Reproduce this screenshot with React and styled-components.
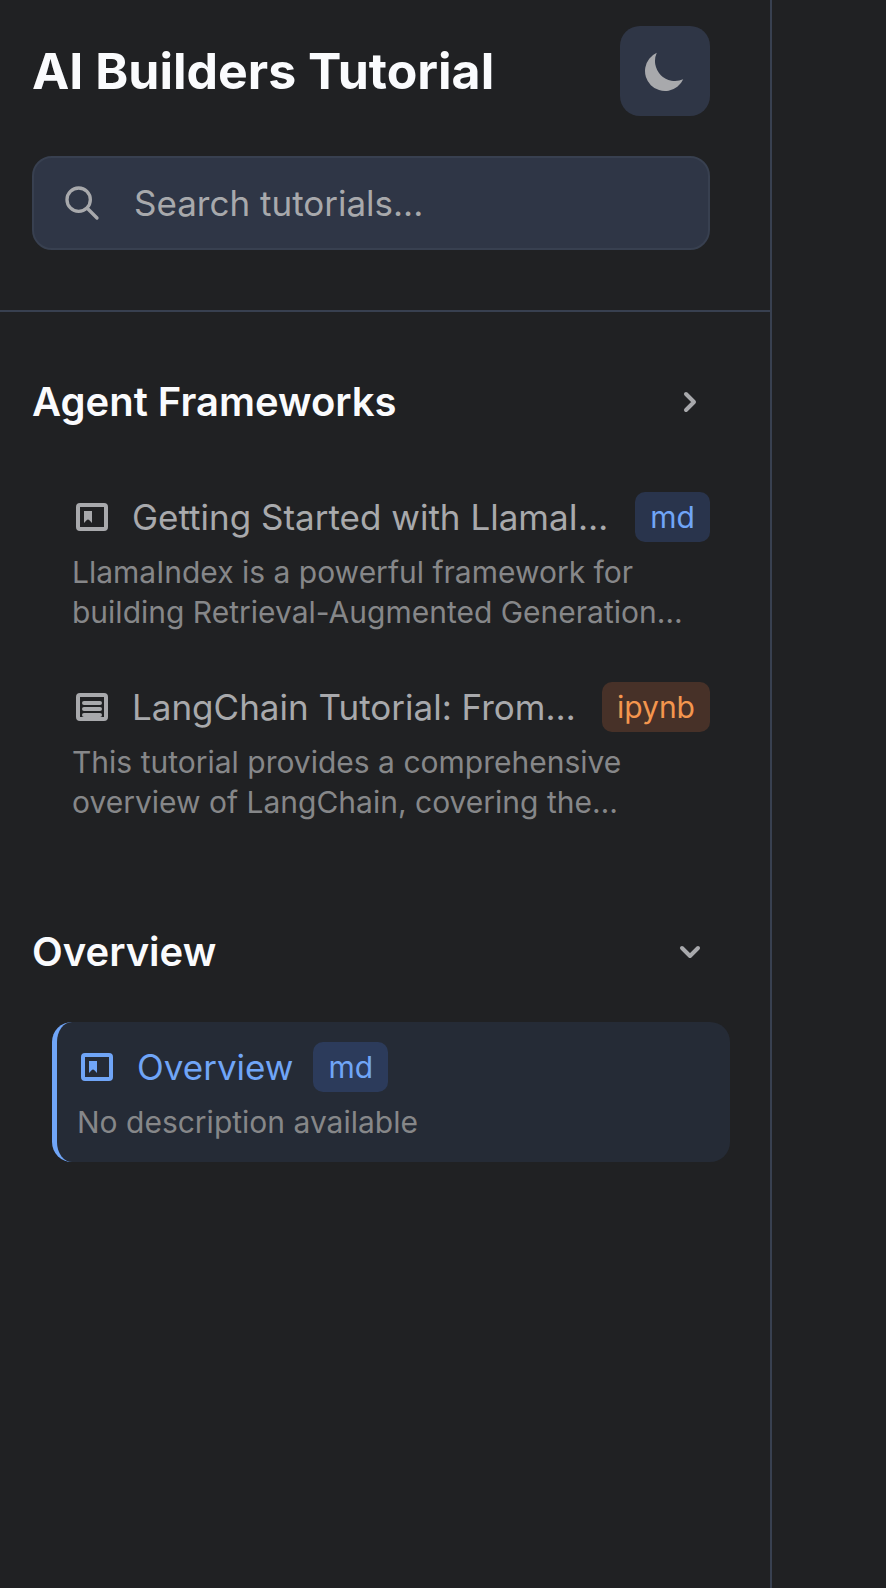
import React from "react";
import styled, { createGlobalStyle, css } from "styled-components";

const colors = {
  page: "#202123",
  surface: "#2f3646",
  line: "#384050",
  heading: "#fafbfd",
  text: "#a8a9ac",
  muted: "#868789",
  blue: "#70a5f7",
  orange: "#f4964e",
};

const GlobalStyle = createGlobalStyle`
  * { box-sizing: border-box; }
  body {
    margin: 0;
    background: ${colors.page};
    font-family: Inter, sans-serif;
    -webkit-font-smoothing: antialiased;
  }
`;

const Sidebar = styled.aside`
  width: 772px;
  height: 1588px;
  border-right: 2px solid ${colors.line};
`;

const Header = styled.header`
  height: 312px;
  padding: 26px 60px 0 32px;
  border-bottom: 2px solid ${colors.line};
`;

const TitleRow = styled.div`
  display: flex;
  align-items: center;
  justify-content: space-between;
  margin-bottom: 40px;
`;

const Title = styled.h1`
  margin: 0;
  font-size: 50px;
  line-height: 70px;
  font-weight: 700;
  color: ${colors.heading};
`;

const ThemeButton = styled.button`
  display: flex;
  width: 90px;
  height: 90px;
  padding: 20px;
  border: 0;
  border-radius: 20px;
  background: ${colors.surface};
  color: ${colors.text};
`;

const SearchBox = styled.label`
  display: flex;
  align-items: center;
  height: 94px;
  padding: 0 28px;
  gap: 32px;
  border: 2px solid ${colors.line};
  border-radius: 20px;
  background: ${colors.surface};
  color: ${colors.text};
`;

const SearchInput = styled.input`
  flex: 1;
  min-width: 0;
  padding: 0;
  border: 0;
  outline: 0;
  background: transparent;
  font: inherit;
  font-size: 35px;
  line-height: 50px;
  color: inherit;
  &::placeholder {
    color: ${colors.text};
    opacity: 1;
  }
`;

const Nav = styled.nav`
  display: flex;
  flex-direction: column;
  gap: 80px;
  padding: 60px 40px 0 32px;
`;

const SectionHeader = styled.div`
  display: flex;
  align-items: center;
  justify-content: space-between;
  height: 60px;
  padding-right: 20px;
  margin-bottom: 40px;
  color: ${colors.text};
`;

const SectionTitle = styled.h2`
  margin: 0;
  font-size: 40px;
  line-height: 60px;
  font-weight: 600;
  color: ${colors.heading};
`;

const ItemList = styled.div`
  display: flex;
  flex-direction: column;
  gap: 10px;
  margin-left: 20px;
`;

const Item = styled.a`
  display: block;
  padding: 20px;
  border-radius: 20px;
  color: ${colors.text};
  ${(p) =>
    p.$active &&
    css`
      border-left: 5px solid ${colors.blue};
      background: #252b36;
      color: ${colors.blue};
    `}
`;

const ItemTop = styled.div`
  display: flex;
  align-items: center;
  gap: 20px;
  height: 50px;
  margin-bottom: 10px;
`;

const ItemTitle = styled.span`
  flex: ${(p) => (p.$fill ? "1 1 0" : "0 0 auto")};
  font-size: 35px;
  line-height: 50px;
  white-space: nowrap;
`;

const tones = {
  blue: css`
    background: #29344c;
    color: ${colors.blue};
  `,
  active: css`
    background: #2c3b5b;
    color: ${colors.blue};
  `,
  orange: css`
    background: #473128;
    color: ${colors.orange};
  `,
};

const Tag = styled.span`
  height: 50px;
  padding: 5px 15px;
  border-radius: 10px;
  font-size: 30px;
  line-height: 40px;
  ${(p) => tones[p.$tone]}
`;

const Description = styled.p`
  margin: 0;
  font-size: 30px;
  line-height: 40px;
  white-space: pre-line;
  color: ${colors.muted};
`;

const Icon = styled.svg`
  display: block;
  flex: none;
  width: ${(p) => p.$size || 40}px;
  height: ${(p) => p.$size || 40}px;
`;

const MoonIcon = () => (
  <Icon $size={50} viewBox="0 0 20 20" fill="currentColor">
    <path d="M17.293 13.293A8 8 0 016.707 2.707a8.001 8.001 0 1010.586 10.586z" />
  </Icon>
);

const SearchIcon = () => (
  <Icon viewBox="0 0 24 24" fill="none" stroke="currentColor" strokeWidth="2" strokeLinecap="round">
    <path d="M21 21l-6-6m2-5a7 7 0 11-14 0 7 7 0 0114 0z" />
  </Icon>
);

const Chevron = ({ open }) => (
  <Icon viewBox="0 0 20 20" fill="none" stroke="currentColor" strokeWidth="2" strokeLinecap="round" strokeLinejoin="round">
    <path d={open ? "M6 8l4 4 4-4" : "M8 6l4 4-4 4"} />
  </Icon>
);

const Frame = () => (
  <path
    fillRule="evenodd"
    d="M4 3a2 2 0 00-2 2v10a2 2 0 002 2h12a2 2 0 002-2V5a2 2 0 00-2-2H4zm0 2h12v10H4V5z"
  />
);

const MarkdownIcon = () => (
  <Icon viewBox="0 0 20 20" fill="currentColor">
    <Frame />
    <path d="M6 7h4v6l-1.3-1.4a.95.95 0 00-1.4 0L6 13z" />
  </Icon>
);

const NotebookIcon = () => (
  <Icon viewBox="0 0 20 20" fill="currentColor">
    <Frame />
    <path d="M6 8h8M6 11h8M6 14h8" stroke="currentColor" strokeWidth="2" strokeLinecap="round" />
  </Icon>
);

const sections = [
  {
    title: "Agent Frameworks",
    open: false,
    items: [
      {
        kind: "md",
        title: "Getting Started with LlamaI…",
        fill: true,
        description: "LlamaIndex is a powerful framework for\nbuilding Retrieval-Augmented Generation…",
      },
      {
        kind: "ipynb",
        title: "LangChain Tutorial: From…",
        fill: true,
        description: "This tutorial provides a comprehensive\noverview of LangChain, covering the…",
      },
    ],
  },
  {
    title: "Overview",
    open: true,
    items: [{ kind: "md", title: "Overview", active: true, description: "No description available" }],
  },
];

const toneOf = (item) => (item.kind === "ipynb" ? "orange" : item.active ? "active" : "blue");

export default function App() {
  return (
    <>
      <GlobalStyle />
      <Sidebar>
        <Header>
          <TitleRow>
            <Title>AI Builders Tutorial</Title>
            <ThemeButton aria-label="Toggle theme">
              <MoonIcon />
            </ThemeButton>
          </TitleRow>
          <SearchBox>
            <SearchIcon />
            <SearchInput placeholder="Search tutorials..." />
          </SearchBox>
        </Header>
        <Nav>
          {sections.map((section) => (
            <section key={section.title}>
              <SectionHeader>
                <SectionTitle>{section.title}</SectionTitle>
                <Chevron open={section.open} />
              </SectionHeader>
              <ItemList>
                {section.items.map((item) => (
                  <Item key={item.title} $active={item.active}>
                    <ItemTop>
                      {item.kind === "md" ? <MarkdownIcon /> : <NotebookIcon />}
                      <ItemTitle $fill={item.fill}>{item.title}</ItemTitle>
                      <Tag $tone={toneOf(item)}>{item.kind}</Tag>
                    </ItemTop>
                    <Description>{item.description}</Description>
                  </Item>
                ))}
              </ItemList>
            </section>
          ))}
        </Nav>
      </Sidebar>
    </>
  );
}
